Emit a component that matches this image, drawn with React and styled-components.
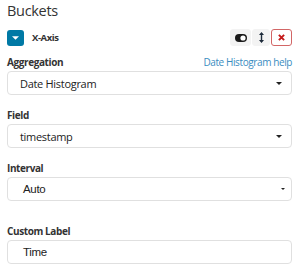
import { createGlobalStyle, styled } from 'styled-components';

const GlobalStyle = createGlobalStyle`
  body {
    margin: 0;
    background: #fff;
    font-family: 'Open Sans', 'Liberation Sans', sans-serif;
    color: #333;
  }
`;

function Caret({ w = 6, color = '#222' }) {
  return (
    <svg width={w} height={Math.ceil(w / 2)} viewBox="0 0 8 4">
      <path d="M0 0 L8 0 L4 4 Z" fill={color} />
    </svg>
  );
}

function Select({ value, native }) {
  return (
    <SELECT_ST $native={native}>
      <span>{value}</span>
      <Caret w={native ? 4 : 6} />
    </SELECT_ST>
  );
}

function App() {
  return (
    <>
      <GlobalStyle />
      <PANEL_ST>
        <TITLE_ST>Buckets</TITLE_ST>
        <AGGHEAD_ST>
          <TOGGLE_ST>
            <Caret w={7} color="#fff" />
          </TOGGLE_ST>
          <AGGNAME_ST>X-Axis</AGGNAME_ST>
          <ACTIONS_ST>
            <ACTION_ST $w={21}>
              <svg width="12" height="8" viewBox="0 0 12 8">
                <rect x="0" y="0" width="12" height="8" rx="4" fill="#1a1a1a" />
                <circle cx="8" cy="4" r="2.6" fill="#fff" />
              </svg>
            </ACTION_ST>
            <ACTION_ST $w={18}>
              <svg width="5" height="11" viewBox="0 0 5 11">
                <path d="M2.5 1.5 V9.5" stroke="#1d2a3a" strokeWidth="1.4" />
                <path d="M0 3 L2.5 0 L5 3 Z M0 8 L2.5 11 L5 8 Z" fill="#1d2a3a" />
              </svg>
            </ACTION_ST>
            <ACTION_ST $w={21} $danger>
              <svg width="7" height="7" viewBox="0 0 8 8">
                <path d="M1 1 L7 7 M7 1 L1 7" stroke="#c41a1a" strokeWidth="2.2" />
              </svg>
            </ACTION_ST>
          </ACTIONS_ST>
        </AGGHEAD_ST>

        <FIELD_ST $top={10}>
          <LABELROW_ST>
            <LABEL_ST>Aggregation</LABEL_ST>
            <HELP_ST>Date Histogram help</HELP_ST>
          </LABELROW_ST>
          <Select value="Date Histogram" />
        </FIELD_ST>

        <FIELD_ST $top={14}>
          <LABEL_ST>Field</LABEL_ST>
          <Select value="timestamp" />
        </FIELD_ST>

        <FIELD_ST $top={14}>
          <LABEL_ST>Interval</LABEL_ST>
          <Select value="Auto" native />
        </FIELD_ST>

        <FIELD_ST $top={24}>
          <LABEL_ST>Custom Label</LABEL_ST>
          <INPUT_ST>Time</INPUT_ST>
        </FIELD_ST>
      </PANEL_ST>
    </>
  );
}

const PANEL_ST = styled.div`
  width: 300px;
  height: 270px;
  padding: 0 8px 0 7px;
  box-sizing: border-box;
  overflow: hidden;
`;

const TITLE_ST = styled.div`
  font-size: 14.5px;
  letter-spacing: -0.3px;
  line-height: 20px;
  padding-top: 1px;
  color: #333;
`;

const AGGHEAD_ST = styled.div`
  display: flex;
  align-items: center;
  height: 17px;
  margin-top: 8px;
`;

const TOGGLE_ST = styled.div`
  width: 17px;
  height: 16px;
  border-radius: 3px;
  background: #0079a5;
  display: flex;
  align-items: center;
  justify-content: center;
`;

const AGGNAME_ST = styled.div`
  margin-left: 8px;
  font-size: 9.5px;
  letter-spacing: -0.4px;
  font-weight: 700;
  color: #333;
`;

const ACTIONS_ST = styled.div`
  margin-left: auto;
  display: flex;
  gap: 1px;
`;

const ACTION_ST = styled.div`
  width: ${(p) => p.$w}px;
  height: 17px;
  box-sizing: border-box;
  border-radius: 3px;
  background: ${(p) => (p.$danger ? '#fff' : '#f3f3f3')};
  border: 1px solid ${(p) => (p.$danger ? '#d26666' : '#f3f3f3')};
  display: flex;
  align-items: center;
  justify-content: center;
`;

const FIELD_ST = styled.div`
  margin-top: ${(p) => p.$top}px;
`;

const LABELROW_ST = styled.div`
  display: flex;
  justify-content: space-between;
  align-items: baseline;
`;

const LABEL_ST = styled.div`
  font-size: 10px;
  letter-spacing: -0.4px;
  font-weight: 700;
  line-height: 12px;
  color: #333;
  margin-bottom: 3px;
`;

const HELP_ST = styled.div`
  font-size: 10px;
  letter-spacing: -0.4px;
  line-height: 12px;
  color: #3a8dbf;
`;

const SELECT_ST = styled.div`
  height: 24px;
  box-sizing: border-box;
  border: 1px solid #e0e0e0;
  border-radius: 4px;
  display: flex;
  align-items: center;
  justify-content: space-between;
  padding: 0 ${(p) => (p.$native ? '6px' : '9px')} 0 ${(p) => (p.$native ? '15px' : '12px')};
  font-size: ${(p) => (p.$native ? '11.5px' : '11px')};
  letter-spacing: ${(p) => (p.$native ? '-0.3px' : '-0.3px')};
  font-family: ${(p) => (p.$native ? "'Liberation Sans', Arial, sans-serif" : "'Open Sans', sans-serif")};
  color: #222;
`;

const INPUT_ST = styled.div`
  height: 24px;
  box-sizing: border-box;
  border: 1px solid #e0e0e0;
  border-radius: 4px;
  display: flex;
  align-items: center;
  padding: 0 15px;
  font-size: 11.5px;
  letter-spacing: -0.3px;
  font-family: 'Liberation Sans', Arial, sans-serif;
  color: #222;
`;

export default App;
